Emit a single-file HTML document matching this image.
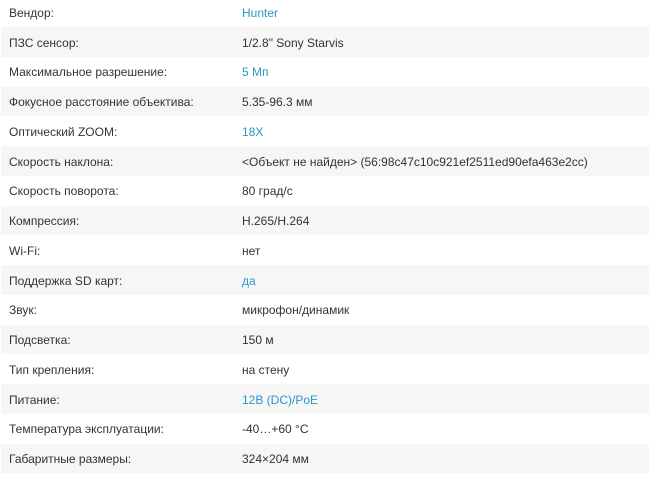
<!DOCTYPE html>
<html><head><meta charset="utf-8"><style>
body{margin:0;background:#fff;font-family:"Liberation Sans",Arial,sans-serif;font-size:12px;color:#333;width:650px;height:494px;overflow:hidden;position:relative}
.t{position:absolute;top:-2.75px;left:1px;width:648px}
.r{height:29.75px;line-height:29.75px;position:relative}
.r:nth-child(even){background:#f6f6f6}
.k{position:absolute;left:8px;top:1.5px}
.v{position:absolute;left:241px;top:1.5px;white-space:nowrap}
.l{color:#2a97c9}
</style></head><body><div class="t">
<div class="r"><span class="k">Вендор:</span><span class="v l">Hunter</span></div>
<div class="r"><span class="k">ПЗС сенсор:</span><span class="v">1/2.8" Sony Starvis</span></div>
<div class="r"><span class="k">Максимальное разрешение:</span><span class="v l">5 Мп</span></div>
<div class="r"><span class="k">Фокусное расстояние объектива:</span><span class="v">5.35-96.3 мм</span></div>
<div class="r"><span class="k">Оптический ZOOM:</span><span class="v l">18X</span></div>
<div class="r"><span class="k">Скорость наклона:</span><span class="v">&lt;Объект не найден&gt; (56:98c47c10c921ef2511ed90efa463e2cc)</span></div>
<div class="r"><span class="k">Скорость поворота:</span><span class="v">80 град/с</span></div>
<div class="r"><span class="k">Компрессия:</span><span class="v">H.265/H.264</span></div>
<div class="r"><span class="k">Wi-Fi:</span><span class="v">нет</span></div>
<div class="r"><span class="k">Поддержка SD карт:</span><span class="v l">да</span></div>
<div class="r"><span class="k">Звук:</span><span class="v">микрофон/динамик</span></div>
<div class="r"><span class="k">Подсветка:</span><span class="v">150 м</span></div>
<div class="r"><span class="k">Тип крепления:</span><span class="v">на стену</span></div>
<div class="r"><span class="k">Питание:</span><span class="v l">12В (DC)/PoE</span></div>
<div class="r"><span class="k">Температура эксплуатации:</span><span class="v">-40…+60 °C</span></div>
<div class="r"><span class="k">Габаритные размеры:</span><span class="v">324×204 мм</span></div>
</div></body></html>
